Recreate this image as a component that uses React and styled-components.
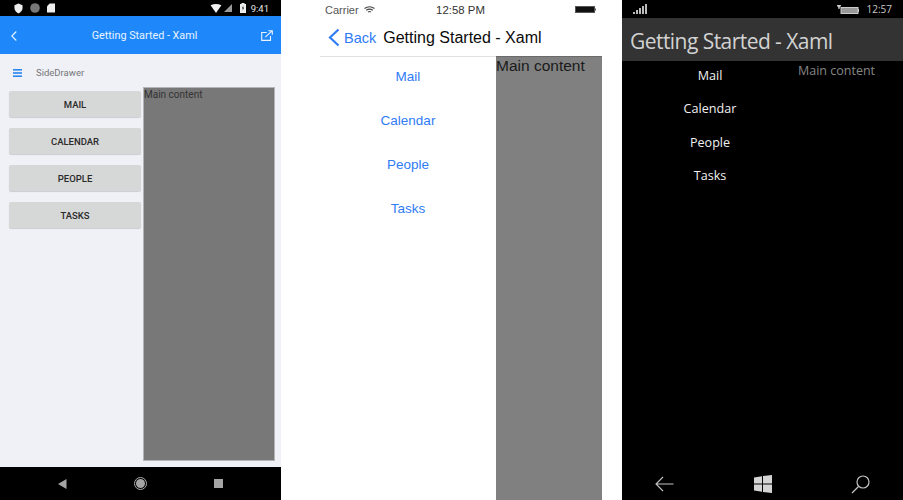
import React from "react";
import styled, { createGlobalStyle } from "styled-components";

const Global = createGlobalStyle`
  html, body { margin: 0; padding: 0; background: #fff; }
  body { width: 903px; height: 500px; overflow: hidden; font-family: "Roboto", "Liberation Sans", sans-serif; }
`;

const Screens = styled.div`
  display: flex;
  width: 903px;
  height: 500px;
`;

/* Android */
const Android = styled.section`
  width: 281px;
  height: 500px;
  display: flex;
  flex-direction: column;
  background: #eff1f6;
  flex: none;
`;
const AStatus = styled.div`
  height: 16px;
  background: #000;
  display: flex;
  align-items: center;
  padding: 0 12px 0 14px;
  gap: 7px;
  color: #e4e4e4;
  font-size: 9.5px;
  font-weight: 400;
`;
const Spacer = styled.div`
  flex: 1;
`;
const AHeader = styled.header`
  height: 38px;
  box-sizing: border-box;
  background: #1e88fb;
  display: flex;
  align-items: center;
  justify-content: space-between;
  padding: 1px 8px 0 11px;
  color: #eaf3ff;
  font-size: 10.8px;
  font-weight: 400;
`;
const ATitle = styled.span`
  margin-left: 11px;
`;
const ABar = styled.div`
  height: 33px;
  box-sizing: border-box;
  padding: 4px 0 0 13px;
  display: flex;
  align-items: center;
  gap: 14px;
  color: #767676;
  font-size: 9.5px;
`;
const ABody = styled.div`
  flex: 1;
  display: flex;
  align-items: flex-start;
  padding: 0 6px 0 9px;
  gap: 2px;
`;
const ADrawer = styled.div`
  width: 132px;
  padding-top: 4px;
  display: flex;
  flex-direction: column;
  gap: 11px;
`;
const AButton = styled.button`
  height: 26px;
  border: 0;
  padding: 0;
  border-radius: 2px;
  background: #d6d7d7;
  box-shadow: 0 1px 1px rgba(0, 0, 0, 0.15);
  color: #2a2a2a;
  font-family: inherit;
  font-size: 9.5px;
  font-weight: 500;
`;
const AMain = styled.div`
  width: 132px;
  height: 374px;
  background: #787878;
  border: 1px solid #b4b4b6;
  box-sizing: border-box;
  color: #333;
  font-size: 10px;
  line-height: 13px;
`;
const ANav = styled.nav`
  height: 33px;
  margin-top: 6px;
  background: #000;
  display: flex;
  align-items: center;
  padding-left: 58px;
  gap: 67px;
`;

/* iOS */
const IOS = styled.section`
  width: 282px;
  height: 500px;
  margin-left: 39px;
  display: flex;
  flex-direction: column;
  flex: none;
  background: #fff;
  font-family: "Liberation Sans", Arial, sans-serif;
`;
const IStatus = styled.div`
  height: 19px;
  display: grid;
  grid-template-columns: 1fr auto 1fr;
  align-items: center;
  font-size: 11px;
  color: #333;
  padding: 0 6px 0 5px;
`;
const ILeft = styled.div`
  display: flex;
  align-items: center;
  gap: 5px;
  color: #555;
`;
const ITime = styled.span`
  font-size: 11.4px;
`;
const IRight = styled.div`
  display: flex;
  justify-content: flex-end;
`;
const INav = styled.header`
  height: 37px;
  display: flex;
  align-items: center;
  padding-left: 8px;
  border-bottom: 1px solid #e2e2e4;
`;
const IBack = styled.span`
  display: flex;
  align-items: center;
  gap: 4px;
  color: #2f7cf6;
  font-size: 14.5px;
  margin-right: 7px;
`;
const ITitle = styled.span`
  color: #0a0a0a;
  font-size: 16px;
`;
const IBody = styled.div`
  flex: 1;
  display: flex;
`;
const IDrawer = styled.div`
  width: 176px;
  display: flex;
  flex-direction: column;
`;
const ILink = styled.div`
  height: 44px;
  display: flex;
  align-items: center;
  justify-content: center;
  color: #2f7cf6;
  font-size: 13.5px;
  padding-bottom: 6px;
  box-sizing: border-box;
`;
const IMain = styled.div`
  flex: 1;
  background: #808080;
  border-top: 1px solid #6a6a6a;
  margin-top: -1px;
  color: #1a1a1a;
  font-size: 15.5px;
  line-height: 18px;
`;

/* Windows */
const Win = styled.section`
  width: 281px;
  height: 500px;
  margin-left: 20px;
  flex: none;
  background: #000;
  display: flex;
  flex-direction: column;
  font-family: "Open Sans", "Liberation Sans", sans-serif;
`;
const WStatus = styled.div`
  height: 18px;
  display: flex;
  align-items: center;
  padding: 0 11px 0 11px;
  color: #c8c8c8;
  font-size: 10px;
  gap: 8px;
`;
const WTitle = styled.header`
  height: 43px;
  background: #333;
  display: flex;
  align-items: center;
  padding: 2px 0 0 8px;
  box-sizing: border-box;
  color: #d2d2d2;
  font-size: 21px;
  letter-spacing: -0.55px;
`;
const WBody = styled.div`
  flex: 1;
  display: flex;
`;
const WDrawer = styled.div`
  width: 176px;
  margin-top: -2px;
  display: flex;
  flex-direction: column;
`;
const WLink = styled.div`
  height: 33.3px;
  display: flex;
  align-items: center;
  justify-content: center;
  color: #f0f0f0;
  font-size: 12.6px;
`;
const WMain = styled.div`
  flex: 1;
  color: #868686;
  font-size: 12.5px;
  line-height: 17px;
  padding-top: 1px;
`;
const WNav = styled.nav`
  height: 32px;
  display: flex;
  align-items: center;
  justify-content: space-between;
  padding: 0 33px;
`;

const items = ["Mail", "Calendar", "People", "Tasks"];

export default function App() {
  return (
    <Screens>
      <Global />
      <Android>
        <AStatus>
          <svg width="9" height="11" viewBox="0 0 10 11"><path d="M5 0l4.500 1.800v3.200c0 2.800-2 5-4.500 6C2.500 10 .5 7.800.5 5V1.800z" fill="#eee" /></svg>
          <svg width="10" height="10" viewBox="0 0 10 10"><circle cx="5" cy="5" r="4.800" fill="#777" /></svg>
          <svg width="8" height="10" viewBox="0 0 9 10"><path d="M3 0h6v10H0V3z" fill="#eee" /></svg>
          <Spacer />
          <svg width="12" height="9" viewBox="0 0 12 10"><path d="M0 1.500Q6-1.500 12 1.500L6 10z" fill="#f2f2f2" /></svg>
          <svg width="8" height="8" viewBox="0 0 9 9" style={{ marginLeft: -5 }}><path d="M9 0v9H0z" fill="#999" /></svg>
          <svg width="6" height="10" viewBox="0 0 6 10" style={{ marginLeft: 1 }}><path d="M1.500 0h3v1H6v9H0V1h1.500z" fill="#eee" /><path d="M3.500 2L2 5.500h1L2.500 8 4 4.500H3z" fill="#000" /></svg>
          <span style={{ marginLeft: -2 }}>9:41</span>
        </AStatus>
        <AHeader>
          <svg width="6" height="10" viewBox="0 0 6 10" fill="none" stroke="#eaf3ff" strokeWidth="1.100"><path d="M5.300.5L.8 5l4.500 4.500" /></svg>
          <ATitle>Getting Started - Xaml</ATitle>
          <svg width="12" height="11" viewBox="0 0 12 11" fill="none" stroke="#eaf3ff" strokeWidth="1.100"><path d="M9.500 6v4.400H.7V2.500h5" /><path d="M4.300 7.200L11 .8M7.300.7h4v4" /></svg>
        </AHeader>
        <ABar>
          <svg width="9" height="8" viewBox="0 0 9 8" fill="#2a86f0"><rect width="9" height="1.600" /><rect y="3.200" width="9" height="1.600" /><rect y="6.400" width="9" height="1.600" /></svg>
          <span>SideDrawer</span>
        </ABar>
        <ABody>
          <ADrawer>
            {items.map((t) => <AButton key={t}>{t.toUpperCase()}</AButton>)}
          </ADrawer>
          <AMain>Main content</AMain>
        </ABody>
        <ANav>
          <svg width="9" height="10" viewBox="0 0 9 10"><path d="M8.500 0v10L0 5z" fill="#a5a5a5" /></svg>
          <svg width="13" height="13" viewBox="0 0 13 13"><circle cx="6.500" cy="6.500" r="6" fill="none" stroke="#aaa" /><circle cx="6.500" cy="6.500" r="4.500" fill="#a5a5a5" /></svg>
          <svg width="9" height="9" viewBox="0 0 9 9"><rect width="9" height="9" fill="#a5a5a5" /></svg>
        </ANav>
      </Android>
      <IOS>
        <IStatus>
          <ILeft>
            <span>Carrier</span>
            <svg width="11" height="8" viewBox="0 0 11 8" fill="none" stroke="#444" strokeWidth="1.100"><path d="M.5 2.500Q5.500-1 10.500 2.500M2.200 4.300Q5.500 2 8.800 4.300M4 6Q5.500 5 7 6" /></svg>
          </ILeft>
          <ITime>12:58 PM</ITime>
          <IRight>
            <svg width="21" height="7" viewBox="0 0 21 7"><rect x="0.500" y="0.500" width="19" height="6" fill="#111" stroke="#555" /><rect x="20" y="2.500" width="1" height="2" fill="#555" /></svg>
          </IRight>
        </IStatus>
        <INav>
          <IBack>
            <svg width="12" height="19" viewBox="0 0 12 19" fill="none" stroke="#2f7cf6" strokeWidth="2.200"><path d="M10.500 1.500L2 9.500l8.500 8" /></svg>
            <span>Back</span>
          </IBack>
          <ITitle>Getting Started - Xaml</ITitle>
        </INav>
        <IBody>
          <IDrawer>
            {items.map((t) => <ILink key={t}>{t}</ILink>)}
          </IDrawer>
          <IMain>Main content</IMain>
        </IBody>
      </IOS>
      <Win>
        <WStatus>
          <svg width="14" height="10" viewBox="0 0 14 10" fill="#bbb"><rect y="8" width="2" height="2" /><rect x="3" y="6" width="2" height="4" /><rect x="6" y="4" width="2" height="6" /><rect x="9" y="2" width="2" height="8" /><rect x="12" width="2" height="10" /></svg>
          <Spacer />
          <svg width="22" height="11" viewBox="0 0 22 11"><rect x="4" y="3.500" width="17" height="6" fill="#999" stroke="#ccc" /><rect x="21" y="5" width="1" height="3" fill="#ccc" /><path d="M0 1h4v1.500H3L2.500 5h-1L1 2.500H0z" fill="#ccc" /></svg>
          <span>12:57</span>
        </WStatus>
        <WTitle>Getting Started - Xaml</WTitle>
        <WBody>
          <WDrawer>
            {items.map((t) => <WLink key={t}>{t}</WLink>)}
          </WDrawer>
          <WMain>Main content</WMain>
        </WBody>
        <WNav>
          <svg width="19" height="16" viewBox="0 0 19 16" fill="none" stroke="#c4c4c4" strokeWidth="1.100"><path d="M18.500 8H1M8 1L1 8l7 7" /></svg>
          <svg width="18" height="18" viewBox="0 0 18 18" fill="#d4d4d4"><path d="M0 2.500l8-1.200v7.200H0zM9 1.100L18 0v8.500H9zM0 9.500h8v7.200l-8-1.200zM9 9.500h9V18l-9-1.100z" /></svg>
          <svg width="19" height="19" viewBox="0 0 19 19" fill="none" stroke="#c4c4c4" strokeWidth="1.200"><circle cx="12" cy="7" r="6" /><path d="M7.500 11.500L1 18" /></svg>
        </WNav>
      </Win>
    </Screens>
  );
}
